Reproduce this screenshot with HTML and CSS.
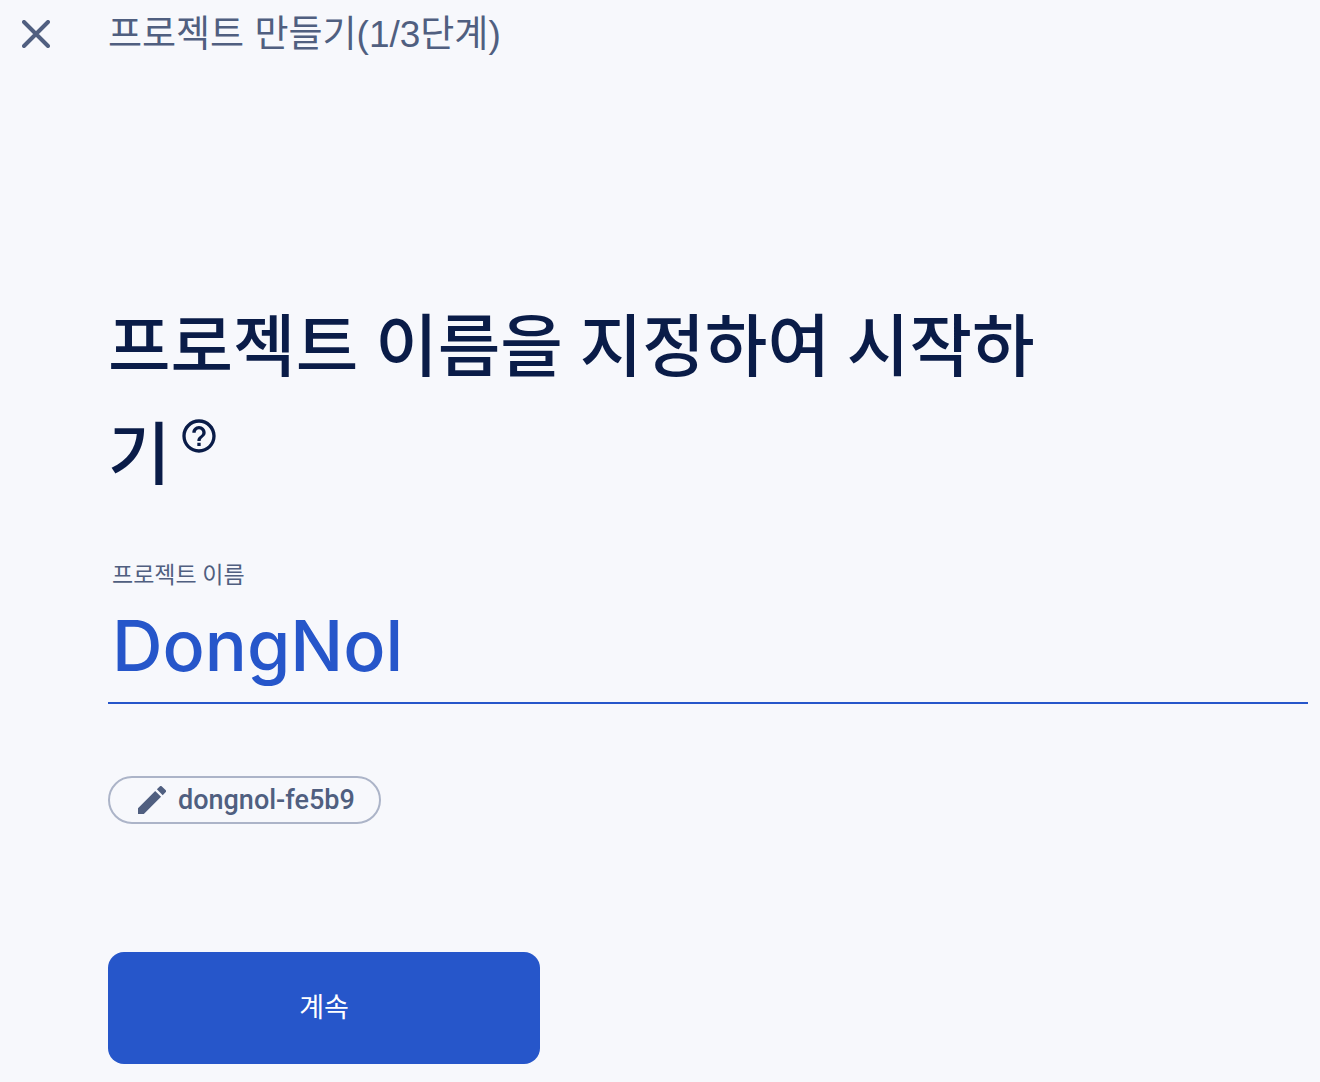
FILE: index.html
```html
<!DOCTYPE html>
<html lang="ko">
<head>
<meta charset="utf-8">
<meta name="viewport" content="width=device-width, initial-scale=1">
<title>프로젝트 만들기</title>
<link rel="stylesheet" href="styles.css">
</head>
<body>
<header class="topbar">
  <button class="close" type="button" aria-label="닫기">
    <svg viewBox="0 0 28 28" width="28" height="28" aria-hidden="true"><path d="M2 2 26 26M26 2 2 26" fill="none" stroke="currentColor" stroke-width="4" stroke-linecap="round"/></svg>
  </button>
  <p class="step">프로젝트 만들기(1/3단계)</p>
</header>
<main class="content">
  <h1 class="title">프로젝트 이름을 지정하여 시작하기<button class="help" type="button" aria-label="도움말"><svg viewBox="0 0 24 24" width="40" height="40" aria-hidden="true"><path fill="currentColor" d="M11 18h2v-2h-2v2zm1-16C6.480 2 2 6.480 2 12s4.480 10 10 10 10-4.480 10-10S17.520 2 12 2zm0 18c-4.410 0-8-3.590-8-8s3.590-8 8-8 8 3.590 8 8-3.590 8-8 8zm0-14c-2.210 0-4 1.790-4 4h2c0-1.100.9-2 2-2s2 .9 2 2c0 2-3 1.750-3 5h2c0-2.250 3-2.500 3-5 0-2.210-1.790-4-4-4z"/></svg></button></h1>
  <form class="form">
    <label class="label" for="name">프로젝트 이름</label>
    <input class="name" id="name" type="text" value="DongNol" spellcheck="false" autocomplete="off">
    <button class="chip" type="button">
      <svg viewBox="3 3 18 18" width="28" height="28" aria-hidden="true"><path fill="currentColor" d="M3 17.250V21h3.750L17.810 9.940l-3.750-3.750L3 17.250zM20.710 7.040a1 1 0 0 0 0-1.410l-2.340-2.340a1 1 0 0 0-1.410 0l-1.830 1.830 3.750 3.750 1.830-1.830z"/></svg>
      dongnol-fe5b9
    </button>
    <button class="continue" type="submit">계속</button>
  </form>
</main>
</body>
</html>
```

FILE: styles.css
```css
* { box-sizing: border-box; }

body {
  margin: 0;
  background: #f7f8fc;
  color: #505f80;
  font-family: Roboto, "Noto Sans CJK KR", sans-serif;
}

button {
  margin: 0;
  padding: 0;
  border: 0;
  background: none;
  color: inherit;
  font: inherit;
  cursor: pointer;
}

svg { display: block; }

.topbar {
  display: flex;
  align-items: center;
  gap: 58px;
  height: 68px;
  padding: 0 22px;
}

.step {
  margin: 0;
  padding-top: 2px;
  font-family: "Liberation Sans", "Noto Sans CJK KR", sans-serif;
  font-size: 37px;
  line-height: 56px;
  font-weight: 400;
}

.content { padding: 226px 12px 18px 108px; }

.title {
  max-width: 960px;
  margin: 0;
  color: #0a1c48;
  font-size: 68px;
  line-height: 108px;
  font-weight: 500;
  word-break: break-all;
}

.help {
  margin-left: 8px;
  vertical-align: 23px;
}

.form {
  display: flex;
  flex-direction: column;
  align-items: flex-start;
}

.label {
  margin-top: 50px;
  padding-left: 4px;
  font-size: 23px;
  line-height: 32px;
}

.name {
  width: 100%;
  height: 112px;
  padding: 0 4px 4px;
  border: 0;
  border-bottom: 2px solid #2656ca;
  outline: 0;
  background: transparent;
  color: #2656ca;
  font-family: Inter, "Noto Sans CJK KR", sans-serif;
  font-size: 70px;
  font-weight: 500;
}

.chip {
  display: flex;
  align-items: center;
  gap: 12px;
  height: 48px;
  margin-top: 72px;
  padding: 0 24px 0 28px;
  border: 2px solid #acb4c8;
  border-radius: 24px;
  font-size: 27px;
  font-weight: 500;
}

.continue {
  width: 432px;
  max-width: 100%;
  height: 112px;
  margin-top: 128px;
  padding-bottom: 6px;
  border-radius: 16px;
  background: #2656ca;
  color: #fff;
  font-size: 27px;
}
```
